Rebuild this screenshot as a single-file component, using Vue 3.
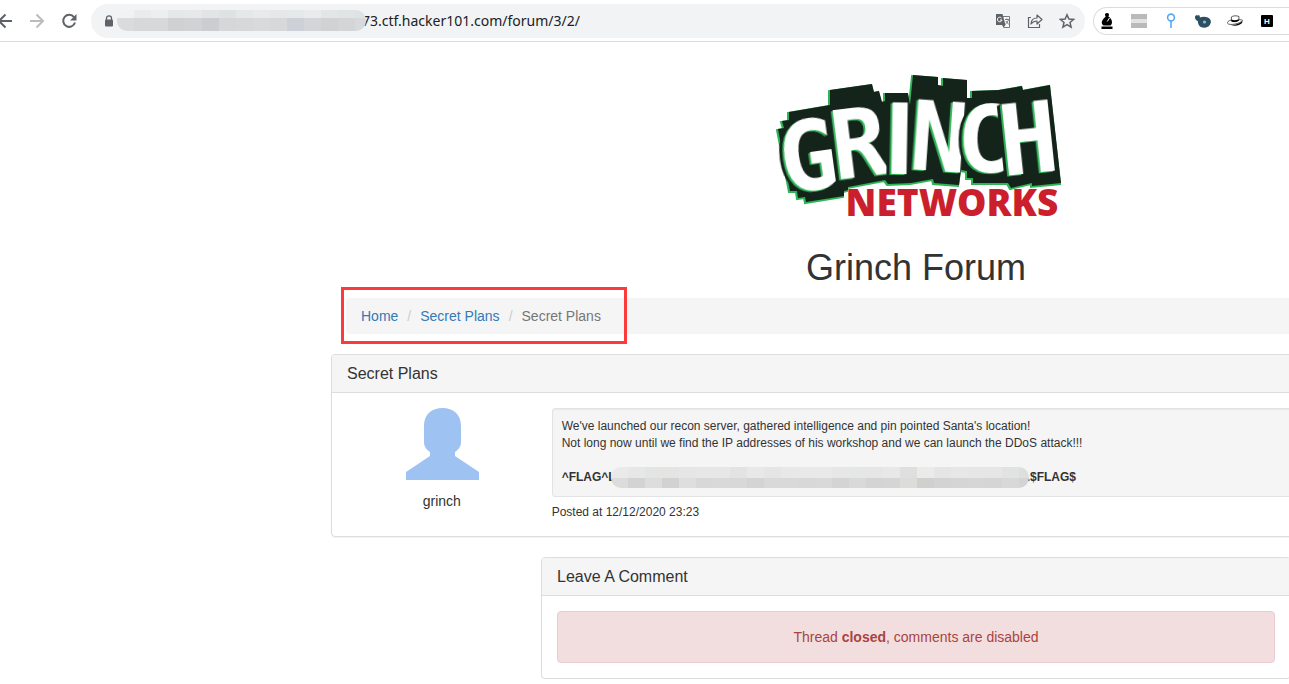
<template>
  <header class="toolbar">
    <nav class="nav-buttons">
      <button type="button" class="icon-button" aria-label="Back">
        <svg width="16" height="16" viewBox="0 0 16 16" fill="none" stroke="#5f6368" stroke-width="2">
          <path d="M15 8H3M8.500 1.500L2 8l6.500 6.500" />
        </svg>
      </button>
      <button type="button" class="icon-button" aria-label="Forward">
        <svg width="16" height="16" viewBox="0 0 16 16" fill="none" stroke="#babcbe" stroke-width="2">
          <path d="M1 8h12M7.500 1.500L14 8l-6.500 6.500" />
        </svg>
      </button>
      <button type="button" class="icon-button" aria-label="Reload">
        <svg width="16" height="16" viewBox="0 0 16 16">
          <path d="M13 4.200A6 6 0 1 0 14 9.500" fill="none" stroke="#5f6368" stroke-width="2" />
          <path d="M15.500 1v6.500H9z" fill="#5f6368" />
        </svg>
      </button>
    </nav>

    <div class="omnibox">
      <svg class="lock" width="10" height="12" viewBox="0 0 10 12">
        <path d="M2.500 5V3.300a2.500 2.500 0 0 1 5 0V5" fill="none" stroke="#5f6368" stroke-width="1.300" />
        <rect x="1" y="4.500" width="8" height="7" rx="1" fill="#5f6368" />
      </svg>
      <svg class="url-mask" width="249" height="21" viewBox="0 0 249 21">
        <template v-for="(c, i) in urlMask" :key="i">
          <rect :x="i * 17" y="0" width="17" height="8" :fill="c[0]" />
          <rect :x="i * 17" y="8" width="17" height="13" :fill="c[1]" />
        </template>
      </svg>
      <input v-model="url" class="url" type="text" aria-label="Address" spellcheck="false" />
      <div class="omnibox-actions">
        <button type="button" class="icon-button" aria-label="Translate">
          <svg width="16" height="16" viewBox="0 0 16 16">
            <path d="M6 3.500h8.500v11H8.500" fill="#f8f9fa" stroke="#777a7d" />
            <path d="M1 1h6.500l3 11H1z" fill="#5f6368" />
            <path d="M6.500 5A2.300 2.300 0 1 0 7 7H5" fill="none" stroke="#fff" />
            <path d="M10 6.500h4M12 5.500v1M13.500 6.500c-.5 2-1.500 3.500-3 4.500M10.800 8l3 3.500" fill="none" stroke="#777a7d" />
            <path d="M7 12h3.500L8.500 14.500z" fill="#5f6368" />
          </svg>
        </button>
        <button type="button" class="icon-button" aria-label="Share">
          <svg width="16" height="16" viewBox="0 0 16 16" fill="none" stroke="#5f6368" stroke-width="1.200">
            <path d="M4 4.500H1.500v10h11V11" />
            <path d="M4 11c.2-4 2.500-6 6-6V2l5 4.500-5 4.500V8C7.500 8 5.500 9 4 11z" stroke-linejoin="round" />
          </svg>
        </button>
        <button type="button" class="icon-button" aria-label="Bookmark">
          <svg width="16" height="16" viewBox="0 0 16 16" fill="none" stroke="#5f6368" stroke-width="1.500">
            <path d="M8 1.800l1.900 4.300 4.700.4-3.600 3 1.100 4.600L8 11.700l-4.100 2.400L5 9.500l-3.600-3 4.700-.4z" />
          </svg>
        </button>
      </div>
    </div>

    <div class="extensions">
      <button type="button" class="icon-button" aria-label="Bishop">
        <svg width="16" height="16" viewBox="0 0 16 16">
          <path d="M8 0c1.500 0 2 .8 2 1.800 0 .7-.3 1.200-.8 1.500C11.500 5 13 7 13 9c0 1.500-.5 2.500-1.500 3.500h-7C3.300 11.500 2.500 10.500 2.800 9 3.200 6.800 5 5.200 6.800 3.300 6.300 3 6 2.500 6 1.800 6 .8 6.500 0 8 0z" />
          <path d="M8.300 8.500L10.500 5" stroke="#fff" />
          <path d="M2.500 13.500h11V16h-11z" />
        </svg>
      </button>
      <button type="button" class="icon-button" aria-label="Rows">
        <svg width="16" height="16" viewBox="0 0 16 16">
          <path d="M0 1h16v14H0z" fill="#bababa" />
          <path d="M0 6h16v4H0z" fill="#e3e3e3" />
        </svg>
      </button>
      <button type="button" class="icon-button" aria-label="Pin">
        <svg width="16" height="16" viewBox="0 0 16 16" fill="none" stroke="#58a8f8" stroke-width="1.600">
          <circle cx="8" cy="4.500" r="3.400" />
          <path d="M8 8v7" />
        </svg>
      </button>
      <button type="button" class="icon-button" aria-label="Whale">
        <svg width="16" height="16" viewBox="0 0 16 16">
          <path d="M0 4c0-1.500 1.500-2 2.800-1.500C4.500 2 5 3 4.800 4.500c4-1.500 9-.8 10.700 2.500 1.300 3-1 7.500-6 7.700-4.500 0-6.500-2.500-6.700-6.700C1 7.500 0 6 0 4z" fill="#2b4f63" />
          <circle cx="9.500" cy="9" r="1.600" fill="#9fb6c0" />
        </svg>
      </button>
      <button type="button" class="icon-button" aria-label="Hat">
        <svg width="16" height="16" viewBox="0 0 16 16">
          <path d="M4 7C1.500 7.800 0 9 .6 10.300 2 12.800 13 11 15.500 7.500c.2-.6-1.500-.9-3.500-.7" fill="#fff" stroke="#333" stroke-width=".8" />
          <path d="M4.500 8L4.300 4C6 2.600 9.500 2.400 12 3.500L11.800 7C9.500 8.800 7 9.200 4.500 8z" fill="#fff" stroke="#333" stroke-width=".8" />
          <path d="M4.300 6.500c2 1 5 .8 7.500-.3v1.600C9.500 9.300 7 9.500 4.500 8.500zM4 12c4 .3 8-.8 11.800-4l-1 2.300C12 12.700 8 13.300 4 12z" />
        </svg>
      </button>
      <button type="button" class="icon-button" aria-label="HackTools">
        <svg width="16" height="16" viewBox="0 0 16 16">
          <rect x="2" y="2" width="12" height="12" rx="1" />
          <text x="8" y="11" class="ext-letter">H</text>
        </svg>
      </button>
    </div>
  </header>

  <main class="page">
    <div class="container">
      <svg class="logo" width="300" height="160" viewBox="-4 0 300 160" role="img" aria-label="Grinch Networks">
        <path :d="logoShape" fill="#2fb457" stroke="#2fb457" stroke-width="2" transform="translate(-1 1)" />
        <path :d="logoShape" fill="#14241a" />
        <text
          v-for="l in logoLetters"
          :key="l.char"
          class="logo-letter"
          :class="{ plain: l.plain }"
          :font-size="l.size"
          :transform="`translate(${l.x} ${l.y}) rotate(${l.angle})`"
        >{{ l.char }}</text>
        <text x="182" y="151" class="logo-networks">NETWORKS</text>
      </svg>

      <h1>Grinch Forum</h1>

      <div class="breadcrumb-wrap">
        <ol class="breadcrumb">
          <li><a href="#">Home</a></li>
          <li><a href="#">Secret Plans</a></li>
          <li class="active">Secret Plans</li>
        </ol>
        <div class="highlight"></div>
      </div>

      <section class="panel">
        <h2 class="panel-heading">Secret Plans</h2>
        <div class="panel-body post">
          <div class="author">
            <svg width="74" height="72" viewBox="0 0 74 72">
              <path
                d="M19 18C19 6 27 0 37.500 0S56 6 56 18v16c0 5-3 8-6 10v4l24 16v8H1v-8l24-16v-4c-3-2-6-5-6-10z"
                fill="#9ec2f2"
              />
            </svg>
            <div>grinch</div>
          </div>
          <div class="content">
            <div class="well">
              <div>We've launched our recon server, gathered intelligence and pin pointed Santa's location!</div>
              <div>Not long now until we find the IP addresses of his workshop and we can launch the DDoS attack!!!</div>
              <br />
              <div class="flag">
                <strong>^FLAG^L</strong>
                <svg class="flag-mask" width="418" height="21" viewBox="0 0 418 21">
                  <template v-for="(c, i) in flagMask" :key="i">
                    <rect :x="i * 17" y="0" width="17" height="11" :fill="c[0]" />
                    <rect :x="i * 17" y="11" width="17" height="10" :fill="c[1]" />
                  </template>
                </svg>
                <strong>.$FLAG$</strong>
              </div>
            </div>
            <div class="posted">Posted at 12/12/2020 23:23</div>
          </div>
        </div>
      </section>

      <section class="panel comment">
        <h2 class="panel-heading">Leave A Comment</h2>
        <div class="panel-body">
          <div class="alert">Thread <strong>closed</strong>, comments are disabled</div>
        </div>
      </section>
    </div>
  </main>
</template>

<script setup>
import { ref } from 'vue'

const url = ref('73.ctf.hacker101.com/forum/3/2/')

// [top, bottom] colour of each block
const urlMask = [
  ['#f1f3f3', '#dadbdd'], ['#eaecec', '#d7d8da'], ['#eceeef', '#d7d8da'],
  ['#e5e8e8', '#cfd1d3'], ['#e7e8e9', '#d1d2d4'], ['#e3e5e5', '#cbced0'],
  ['#dfe2e3', '#d6d7d9'], ['#e5e8e9', '#d7d8d9'], ['#e8eaec', '#d9dadb'],
  ['#e5e7e9', '#d6d8d9'], ['#e6e9ea', '#cdd1d7'], ['#e9ebec', '#d3d5d8'],
  ['#e3e6e6', '#d0d2d4'], ['#dfe4e5', '#d3d5d6'], ['#dfe2e4', '#d7d9da']
]
const flagMask = [
  ['#e9eaea', '#dcdcdc'], ['#e7e7e7', '#d3d3d3'], ['#e3e4e4', '#dddddd'],
  ['#e4e4e2', '#d2d2d2'], ['#e6e6e6', '#dedede'], ['#e7e7e7', '#d8d8d8'],
  ['#e7e7e7', '#d9d9d9'], ['#e3e3e3', '#d8d8d8'], ['#e8e8e8', '#d4d4d4'],
  ['#e5e5e5', '#d9d9d9'], ['#e8e8e8', '#d9d9d9'], ['#e9e9e9', '#d8d8d8'],
  ['#e9e9e9', '#d9d9d9'], ['#e7e7e7', '#d4d4d4'], ['#e4e7e6', '#d9d9d9'],
  ['#e6e6e6', '#d4d4d4'], ['#e8e8e8', '#d5d5d5'], ['#dfdfdf', '#dcdcda'],
  ['#ebebe9', '#d0d0cf'], ['#e5e5e5', '#d3d3d3'], ['#e7e7e7', '#d5d5d5'],
  ['#e6e6e6', '#d6d6d6'], ['#e6e6e6', '#d5d5d5'], ['#e1e2e2', '#d8d8d8'],
  ['#dddfdf', '#d3d4d4']
]

// dark backing of the logo, stepped like pixels
const logoShape =
  'M19 47L60 40V25L102 19L104 27L109 26L112 37L115 36V28L138 28L140 40L143 10L168 12V20L173 21V13L197 15V33H202V26L229 25L252 21' +
  'L253 25L280 20L291 118L262 121V118L241 123L238 118H203V113H197V106L191 105L189 120L164 118L163 114L141 118L118 119L115 115L78 122' +
  'V125L74 126V131L36 137L35 132L28 133L27 126L20 126L8 64L14 63L12 56L19 55Z'

const logoLetters = [
  { char: 'G', x: 43, y: 125, size: 96, angle: -8 },
  { char: 'R', x: 93, y: 111, size: 94, angle: -7 },
  { char: 'I', x: 129, y: 109, size: 104, angle: 1, plain: true },
  { char: 'N', x: 167, y: 106, size: 96, angle: 4 },
  { char: 'C', x: 214, y: 107, size: 92, angle: 1 },
  { char: 'H', x: 262, y: 108, size: 98, angle: -6 }
]
</script>

<style>
body {
  margin: 0;
  background: #fff;
}
</style>

<style scoped>
.toolbar {
  display: flex;
  align-items: center;
  height: 41px;
  border-bottom: 1px solid #dadce0;
  font-family: "Noto Sans", sans-serif;
  overflow: hidden;
}
.icon-button {
  display: flex;
  padding: 0;
  border: 0;
  background: none;
  cursor: pointer;
}
.nav-buttons {
  display: flex;
  gap: 16px;
  width: 94px;
  margin-left: -3px;
}
.omnibox {
  flex: 1;
  display: flex;
  align-items: center;
  height: 34px;
  padding: 0 10px 0 13px;
  border-radius: 17px;
  background: #f1f3f4;
  box-sizing: border-box;
}
.lock {
  margin-right: 3px;
}
.url-mask {
  flex: none;
  z-index: 1;
  border-radius: 10px;
}
.url {
  flex: 1;
  min-width: 0;
  margin-left: -4px;
  padding: 0;
  border: 0;
  outline: 0;
  background: none;
  color: #202124;
  font-family: inherit;
  font-size: 14px;
}
.omnibox-actions {
  display: flex;
  gap: 16px;
}
.extensions {
  display: flex;
  align-items: center;
  gap: 16px;
  height: 28px;
  width: 196px;
  margin-left: 8px;
  padding-left: 5px;
  border: 1px solid #dadce0;
  border-right: 0;
  border-radius: 14px 0 0 14px;
  box-sizing: border-box;
}
.ext-letter {
  fill: #fff;
  font-size: 8px;
  font-weight: bold;
  text-anchor: middle;
}

.page {
  overflow: hidden;
  padding-top: 23px;
  color: #333;
  font-family: "Liberation Sans", Arial, sans-serif;
  font-size: 14px;
  line-height: 20px;
}
/* the container runs past the right edge of the window */
.container {
  margin: 0 -212px 0 331px;
}
.logo {
  display: block;
  margin: 0 auto;
}
.logo-letter {
  fill: #fff;
  font-family: "DejaVu Sans Mono", monospace;
  font-weight: bold;
  line-height: 1;
  text-anchor: middle;
  filter: drop-shadow(-2px 1px 0 #2fb457) drop-shadow(-3px 0 0 #14241a);
}
.logo-letter.plain {
  font-family: "Liberation Sans", Arial, sans-serif;
}
.logo-networks {
  fill: #cc1f2d;
  font-family: "Open Sans", sans-serif;
  font-size: 37px;
  font-weight: 800;
  text-anchor: middle;
}
h1 {
  margin: 23px 0 10px;
  font-size: 36px;
  font-weight: 500;
  line-height: 40px;
  text-align: center;
}
.breadcrumb-wrap {
  position: relative;
  margin: 0 15px 20px;
}
.breadcrumb {
  display: flex;
  margin: 0;
  padding: 8px 15px;
  border-radius: 4px;
  background: #f5f5f5;
  list-style: none;
}
.breadcrumb li + li::before {
  content: "/";
  padding: 0 9px;
  color: #ccc;
}
.breadcrumb a {
  color: #337ab7;
  text-decoration: none;
}
.breadcrumb .active {
  color: #777;
}
.highlight {
  position: absolute;
  top: -11px;
  left: -5px;
  width: 286px;
  height: 57px;
  border: 3px solid #fb3b3b;
  box-sizing: border-box;
  pointer-events: none;
}
.panel {
  margin-bottom: 20px;
  border: 1px solid #ddd;
  border-radius: 4px;
  box-shadow: 0 1px 1px rgba(0, 0, 0, 0.05);
}
.panel-heading {
  margin: 0;
  padding: 10px 15px;
  border-bottom: 1px solid #ddd;
  border-radius: 3px 3px 0 0;
  background: #f5f5f5;
  font-size: 16px;
  font-weight: 500;
  line-height: 17px;
}
.panel-body {
  padding: 15px;
}
.post {
  display: grid;
  grid-template-columns: 1fr 5fr;
}
.author {
  text-align: center;
}
.author svg {
  display: block;
  margin: 0 auto 11px;
}
.content {
  padding: 0 15px;
  font-size: 12px;
  line-height: 17px;
}
.well {
  padding: 9px 9px 10px;
  border: 1px solid #e3e3e3;
  border-radius: 3px;
  background: #f5f5f5;
  box-shadow: inset 0 1px 1px rgba(0, 0, 0, 0.05);
}
.flag {
  display: flex;
  align-items: center;
  height: 17px;
}
.flag-mask {
  flex: none;
  z-index: 1;
  margin: 0 -2px 0 -5px;
  border-radius: 10px;
}
.posted {
  padding-top: 7px;
}
.comment {
  margin: 0 210px;
}
.alert {
  padding: 15px;
  border: 1px solid #ebccd1;
  border-radius: 4px;
  background: #f2dede;
  color: #a94442;
  text-align: center;
}
</style>
